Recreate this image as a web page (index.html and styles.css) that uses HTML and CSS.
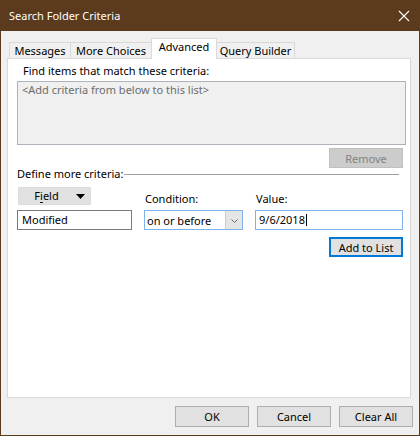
FILE: index.html
```html
<!DOCTYPE html>
<html lang="en">
<head>
<meta charset="utf-8">
<title>Search Folder Criteria</title>
<link rel="stylesheet" href="styles.css">
</head>
<body>
<div class="window">
  <div class="titlebar">
    <span class="title">Search Folder Criteria</span>
    <svg class="close" width="12" height="12" viewBox="0 0 12 12" aria-hidden="true">
      <path d="M1 1 L11 11 M11 1 L1 11" stroke="#ffffff" stroke-width="1.1" fill="none"/>
    </svg>
  </div>

  <div class="content">
    <div class="tabs">
      <div class="tab tab-messages">Messages</div>
      <div class="tab tab-more">More Choices</div>
      <div class="tab tab-advanced active">Advanced</div>
      <div class="tab tab-query">Query Builder</div>
    </div>

    <div class="panel">
      <div class="label find-label">Find items that match these criteria:</div>
      <div class="criteria-list">&lt;Add criteria from below to this list&gt;</div>
      <div class="row-right remove-row">
        <button class="btn btn-disabled">Remove</button>
      </div>

      <div class="group-head">
        <span>Define more criteria:</span>
        <span class="group-rule"></span>
      </div>

      <div class="fields">
        <div class="col col-field">
          <button class="btn btn-field">F<u>i</u>eld
            <svg class="caret" width="9" height="5" viewBox="0 0 9 5" aria-hidden="true">
              <path d="M0 0 H9 L4.5 5 Z" fill="#000000"/>
            </svg>
          </button>
          <div class="input input-plain">Modified</div>
        </div>
        <div class="col col-cond">
          <div class="label">Condition:</div>
          <div class="combo">
            <span class="combo-text">on or before</span>
            <span class="combo-btn">
              <svg width="7" height="4" viewBox="0 0 7 4" aria-hidden="true">
                <path d="M0.5 0.5 L3.5 3.5 L6.5 0.5" stroke="#6a6a6a" stroke-width="1" fill="none"/>
              </svg>
            </span>
          </div>
        </div>
        <div class="col col-value">
          <div class="label">Value:</div>
          <div class="input input-focus">9/6/2018<span class="caret-line"></span></div>
        </div>
      </div>

      <div class="row-right add-row">
        <button class="btn btn-default">Add to List</button>
      </div>
    </div>

    <div class="footer">
      <button class="btn">OK</button>
      <button class="btn">Cancel</button>
      <button class="btn">Clear All</button>
    </div>
  </div>
</div>
</body>
</html>
```

FILE: styles.css
```css
* {
  box-sizing: border-box;
}

html,
body {
  margin: 0;
  padding: 0;
  background: #f0f0f0;
}

body {
  font-family: "Noto Sans", "Open Sans", sans-serif;
  font-size: 11px;
  color: #000000;
}

.window {
  width: 420px;
  height: 436px;
  border: 1px solid #5b3a1d;
  border-top: 0;
  background: #f0f0f0;
  display: flex;
  flex-direction: column;
}

/* Title bar */
.titlebar {
  height: 31px;
  margin: 0 -1px;
  padding: 0 10px 0 9px;
  background: #5b3a1d;
  color: #ffffff;
  display: flex;
  align-items: center;
  justify-content: space-between;
}

.title {
  font-size: 11px;
  margin-top: -1px;
}

.close {
  display: block;
  margin-top: 1px;
}

/* Body of the dialog */
.content {
  flex: 1;
  padding: 7px 0 0 6px;
  display: flex;
  flex-direction: column;
}

/* Tab strip */
.tabs {
  display: flex;
  align-items: flex-end;
  height: 20px;
  margin-left: 2px;
  position: relative;
  z-index: 1;
}

.tab {
  height: 16px;
  border: 1px solid #d9d9d9;
  border-bottom: 0;
  background: #f0f0f0;
  text-align: center;
  line-height: 15px;
  white-space: nowrap;
}

.tab + .tab {
  margin-left: -1px;
}

.tab-messages { width: 62px; }
.tab-more { width: 82px; }
.tab-advanced { width: 66px; }
.tab-query { width: 79px; }

.tab.active {
  height: 21px;
  margin-bottom: -1px;
  background: #ffffff;
  line-height: 16px;
  position: relative;
}

/* Tab page */
.panel {
  width: 404px;
  height: 340px;
  background: #ffffff;
  border: 1px solid #d9d9d9;
  padding: 5px 7px 0 9px;
  display: flex;
  flex-direction: column;
}

.label {
  line-height: 14px;
  white-space: nowrap;
}

.find-label {
  margin-left: 6px;
}

.criteria-list {
  margin-top: 3px;
  width: 389px;
  height: 64px;
  background: #f0f0f0;
  border: 1px solid #adb2bb;
  color: #6d6d6d;
  padding: 1px 0 0 4px;
  line-height: 14px;
}

.row-right {
  display: flex;
  justify-content: flex-end;
}

.remove-row {
  margin-top: 3px;
}

/* Buttons */
.btn {
  font-family: inherit;
  font-size: 11px;
  width: 74px;
  height: 21px;
  padding: 0;
  margin: 0;
  background: #e1e1e1;
  border: 1px solid #adadad;
  color: #000000;
  line-height: 17px;
}

.btn-disabled {
  height: 20px;
  background: #cccccc;
  border-color: #bfbfbf;
  color: #838383;
}

.btn-default {
  height: 20px;
  border: 2px solid #0078d7;
  line-height: 15px;
}

/* "Define more criteria" group heading */
.group-head {
  margin-top: -1px;
  display: flex;
  align-items: center;
  width: 382px;
  line-height: 14px;
}

.group-rule {
  flex: 1;
  height: 1px;
  background: #a0a0a0;
  margin-left: 1px;
}

/* Criteria inputs */
.fields {
  margin-top: 6px;
  display: flex;
  align-items: flex-end;
}

.col {
  display: flex;
  flex-direction: column;
}

.col-field {
  width: 127px;
}

.col-cond {
  width: 111px;
}

.col-value {
  width: 148px;
}

.col .label {
  margin-left: 1px;
  margin-bottom: 4px;
}

.btn-field {
  width: 73px;
  height: 18px;
  margin-left: 1px;
  margin-bottom: 5px;
  border-color: #dcdcdc;
  display: flex;
  align-items: center;
  justify-content: center;
  line-height: 14px;
  position: relative;
  padding-right: 16px;
}

.btn-field u {
  text-decoration-thickness: 1px;
  text-underline-offset: 2px;
}

.btn-field .caret {
  position: absolute;
  right: 5px;
  top: 6px;
}

.input {
  height: 20px;
  border: 1px solid #7a7a7a;
  background: #ffffff;
  padding-left: 4px;
  line-height: 18px;
  white-space: nowrap;
}

.input-plain {
  width: 115px;
}

.input-focus {
  width: 148px;
  border-color: #7eb4ea;
  padding-left: 3px;
  display: flex;
  align-items: center;
}

.caret-line {
  display: inline-block;
  width: 1px;
  height: 12px;
  background: #000000;
  margin-left: 1px;
}

.combo {
  width: 99px;
  height: 20px;
  border: 1px solid #7eb4ea;
  background: #ffffff;
  display: flex;
  align-items: stretch;
}

.combo-text {
  flex: 1;
  line-height: 18px;
  padding-left: 1px;
  border: 1px solid #ffffff;
  border-right: 0;
  white-space: nowrap;
}

.combo-btn {
  width: 17px;
  background: #e5e5e5;
  border-left: 1px solid #cccccc;
  display: flex;
  align-items: center;
  justify-content: center;
}

.combo-btn svg {
  display: block;
  margin-top: 2px;
}

.add-row {
  margin-top: 7px;
}

/* Dialog buttons */
.footer {
  display: flex;
  justify-content: flex-end;
  gap: 8px;
  margin-top: 8px;
  padding-right: 6px;
}
```
